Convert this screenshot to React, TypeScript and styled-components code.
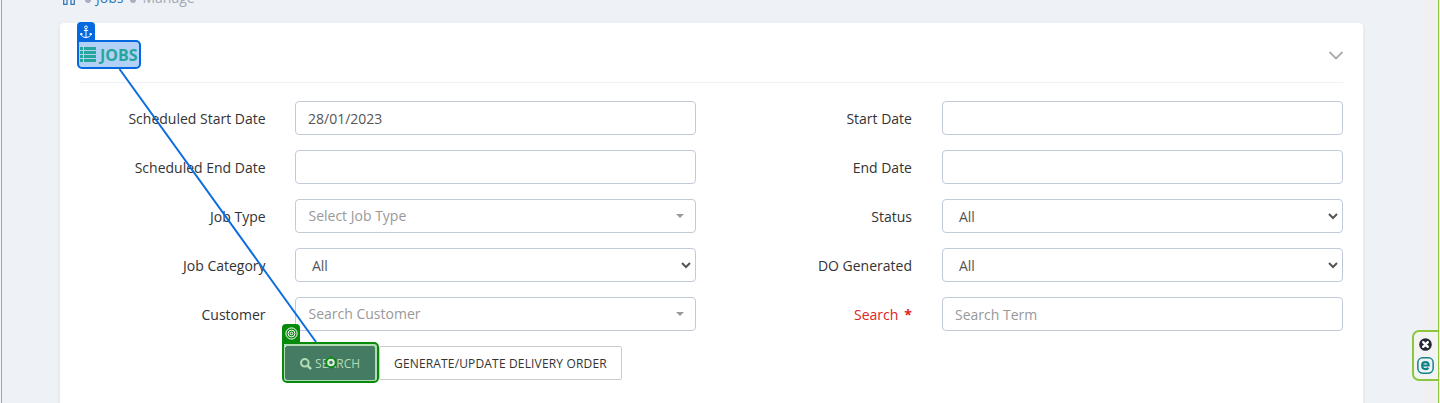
import React from "react";
import styled, { createGlobalStyle } from "styled-components";

const Global = createGlobalStyle`
  * { box-sizing: border-box; }
  body { margin: 0; overflow: hidden; background: #eef1f6; font-family: "Open Sans", sans-serif; font-size: 14px; color: #333; }
`;

const Frame = styled.div`
  position: relative;
  display: flex;
  width: 1440px;
  height: 403px;
  overflow: hidden;
  border-left: 1px solid #f7f5fa;
  border-right: 1px solid #fbf8ff;
`;

const Content = styled.div`
  display: flex;
  flex-direction: column;
  width: 1422px;
  padding-left: 58px;
  border-left: 1px solid #8cc63f;
  background: #eef1f6;
`;

const ScrollTrack = styled.div`
  width: 16px;
  background: #f0f0f0;
  border-right: 1px solid #8cc63f;
`;

const Breadcrumb = styled.nav`
  display: flex;
  flex-shrink: 0;
  align-items: flex-start;
  height: 23px;
  line-height: 20px;
`;

const Crumb = styled.span<{ $link?: boolean; $gap: number }>`
  margin: -12px 0 0 ${(p) => p.$gap}px;
  color: ${(p) => (p.$link ? "#337ab7" : "#a3a9b3")};
`;

const Dot = styled.i<{ $gap: number }>`
  width: 6px;
  height: 6px;
  margin: -3px 0 0 ${(p) => p.$gap}px;
  border-radius: 50%;
  background: #a9b1c0;
`;

const Home = styled.svg`
  margin: -8px 0 0 2px;
`;

const Card = styled.section`
  flex-shrink: 0;
  width: 1303px;
  height: 400px;
  padding: 0 20px;
  border-radius: 4px;
  background: #fff;
  box-shadow: 0 2px 3px 2px rgba(0, 0, 0, 0.03);
`;

const CardHeader = styled.header`
  display: flex;
  align-items: center;
  justify-content: space-between;
  height: 60px;
  padding-top: 6px;
  border-bottom: 1px solid #eef1f5;
`;

const Title = styled.h1`
  position: relative;
  z-index: 2;
  display: flex;
  align-items: center;
  gap: 4px;
  margin: 0 0 2px;
  font-size: 16px;
  font-weight: 700;
  line-height: 22px;
  color: #26a69a;
`;

const Form = styled.form`
  display: grid;
  grid-template-columns: 185.6px 29.4px 401px 216px 30px 401px;
  grid-auto-rows: 34px;
  row-gap: 15px;
  padding-top: 18px;
`;

const Label = styled.label<{ $required?: boolean }>`
  padding-top: 8px;
  line-height: 19px;
  text-align: right;
  white-space: nowrap;
  color: ${(p) => (p.$required ? "#e02222" : "#333")};

  &:nth-of-type(odd) { grid-column: 1; }
  &:nth-of-type(even) { grid-column: 4; }
`;

const Star = styled.b`
  margin-left: 6px;
`;

const Control = styled.div<{ $kind: Kind; $placeholder?: boolean }>`
  display: flex;
  align-items: center;
  justify-content: space-between;
  height: 34px;
  padding: ${(p) => (p.$kind === "native" ? "2px 4px 0 16px" : p.$kind === "search" ? "0 11px 0 12.5px" : "2px 12px 0")};
  border: 1px solid #c2cad8;
  border-radius: 4px;
  background: #fff;
  line-height: 20px;
  color: ${(p) => (p.$placeholder ? "#999" : "#555")};

  &:nth-of-type(odd) { grid-column: 3; }
  &:nth-of-type(even) { grid-column: 6; }
`;

const Caret = styled.i`
  border: 4px solid transparent;
  border-top-color: #999;
  border-bottom: 0;
`;

const NativeArrow = styled.svg`
  margin-top: -2px;
`;

const Actions = styled.div`
  display: flex;
  gap: 3px;
  padding: 15px 0 0 205px;
`;

const Button = styled.button<{ $primary?: boolean }>`
  display: flex;
  align-items: center;
  gap: 3px;
  width: ${(p) => (p.$primary ? 91 : 243)}px;
  height: 34px;
  padding: 2px 14px 0;
  border: 1px solid ${(p) => (p.$primary ? "#457b63" : "#ccc")};
  border-radius: 2px;
  background: ${(p) => (p.$primary ? "#457b63" : "#fff")};
  color: ${(p) => (p.$primary ? "#b1dcb3" : "#333")};
  font: 500 12px/18px "Open Sans", sans-serif;
  letter-spacing: ${(p) => (p.$primary ? 0.1 : 0.16)}px;
  white-space: nowrap;
`;

const Link = styled.svg`
  position: absolute;
  left: -1px;
  top: 0;
  pointer-events: none;
`;

const Outline = styled.div<{ $x: number; $y: number; $w: number; $h: number; $color: string; $fill: string; $ring?: string }>`
  position: absolute;
  left: ${(p) => p.$x - 1}px;
  top: ${(p) => p.$y}px;
  width: ${(p) => p.$w}px;
  height: ${(p) => p.$h}px;
  border: 2px solid ${(p) => p.$color};
  border-radius: 0 5px 5px 5px;
  background: ${(p) => p.$fill};
  box-shadow: ${(p) => (p.$ring ? `inset 0 0 0 1px ${p.$ring}, inset -1px 1px 0 1px ${p.$ring}` : "none")};
`;

const Tag = styled.span<{ $color: string }>`
  position: absolute;
  left: -2px;
  top: -20px;
  display: flex;
  align-items: center;
  justify-content: center;
  width: 18px;
  height: 19px;
  border-radius: 4px 4px 0 0;
  background: ${(p) => p.$color};
`;

const Target = styled.i`
  position: absolute;
  left: 41px;
  top: 12px;
  width: 12px;
  height: 13px;
`;

const Dock = styled.aside`
  position: absolute;
  right: 0;
  top: 330px;
  display: flex;
  flex-direction: column;
  align-items: center;
  gap: 6px;
  width: 27px;
  height: 51px;
  padding: 6px 1px 0 0;
  border: 2px solid #8cc63f;
  border-right-width: 1px;
  border-radius: 7px 0 0 7px;
  background: #f3f3f3;
`;

type Kind = "input" | "native" | "search";

interface Field {
  label: string;
  kind: Kind;
  value?: string;
  placeholder?: boolean;
  required?: boolean;
}

const fields: Field[] = [
  { label: "Scheduled Start Date", kind: "input", value: "28/01/2023" },
  { label: "Start Date", kind: "input" },
  { label: "Scheduled End Date", kind: "input" },
  { label: "End Date", kind: "input" },
  { label: "Job Type", kind: "search", value: "Select Job Type", placeholder: true },
  { label: "Status", kind: "native", value: "All" },
  { label: "Job Category", kind: "native", value: "All" },
  { label: "DO Generated", kind: "native", value: "All" },
  { label: "Customer", kind: "search", value: "Search Customer", placeholder: true },
  { label: "Search", kind: "input", value: "Search Term", placeholder: true, required: true },
];

const ListIcon = () => (
  <svg width="16" height="15" viewBox="0 0 16 15" fill="#26a69a">
    {[0, 4, 8, 12].map((y) => (
      <g key={y}>
        <rect x="0" y={y} width="3" height="3" />
        <rect x="4" y={y} width="12" height="3" />
      </g>
    ))}
  </svg>
);

const Chevron = () => (
  <NativeArrow width="10" height="7" viewBox="0 0 10 7" fill="none" stroke="#555" strokeWidth="2">
    <path d="M1 1 5 5 9 1" />
  </NativeArrow>
);

const AnchorIcon = () => (
  <svg width="12" height="14" viewBox="0 0 12 14" fill="none" stroke="#fff" strokeWidth="1">
    <circle cx="6" cy="2.3" r="1.4" />
    <path d="M6 3.7V12.5M3.8 5.5H8.2M1 8.5C1.2 11.2 3 12.3 6 12.5 9 12.3 10.8 11.2 11 8.5M.4 10 1 8.2 2.8 9.3M11.6 10 11 8.2 9.2 9.3" />
  </svg>
);

export default function App() {
  return (
    <>
      <Global />
      <Frame>
        <Content>
          <Breadcrumb>
            <Home width="14" height="13" viewBox="0 0 14 13" fill="none" stroke="#337ab7" strokeWidth="1.3">
              <path d="M1.7 4V12.3H5V6H9V12.3H12.3V4" />
            </Home>
            <Dot $gap={9} />
            <Crumb $link $gap={5}>Jobs</Crumb>
            <Dot $gap={7} />
            <Crumb $gap={6}>Manage</Crumb>
          </Breadcrumb>
          <Card>
            <CardHeader>
              <Title><ListIcon />JOBS</Title>
              <svg width="14" height="9" viewBox="0 0 14 9" fill="none" stroke="#aaa" strokeWidth="1.8">
                <path d="M.5 1 7 7.5 13.5 1" />
              </svg>
            </CardHeader>
            <Form>
              {fields.map((f) => (
                <React.Fragment key={f.label}>
                  <Label $required={f.required}>{f.label}{f.required && <Star>*</Star>}</Label>
                  <Control $kind={f.kind} $placeholder={f.placeholder}>
                    <span>{f.value}</span>
                    {f.kind === "native" && <Chevron />}
                    {f.kind === "search" && <Caret />}
                  </Control>
                </React.Fragment>
              ))}
            </Form>
            <Actions>
              <Button type="button" $primary>
                <svg width="12" height="12" viewBox="0 0 13 13" fill="none" stroke="#b1dcb3" strokeWidth="2.2">
                  <circle cx="5.2" cy="5.2" r="4.1" />
                  <path d="M8.2 8.2 12 12" strokeWidth="2.8" />
                </svg>
                SEARCH
              </Button>
              <Button type="button">GENERATE/UPDATE DELIVERY ORDER</Button>
            </Actions>
          </Card>
        </Content>
        <ScrollTrack />
        <Link width="1440" height="403" fill="none">
          <path d="M119.5 69 316 342" stroke="#0a6ce0" strokeWidth="2" />
        </Link>
        <Outline $x={77} $y={40} $w={64} $h={29} $color="#0468e0" $fill="rgba(4,104,224,.3)">
          <Tag $color="#0468e0"><AnchorIcon /></Tag>
        </Outline>
        <Outline $x={282} $y={342} $w={97} $h={41} $color="#078a0c" $fill="transparent" $ring="#b1dcb3">
          <Tag $color="#078a0c">
            <svg width="13" height="13" viewBox="0 0 13 13" fill="none" stroke="#fff">
              <circle cx="6.5" cy="6.5" r="5.6" />
              <circle cx="6.5" cy="6.5" r="3.4" />
              <circle cx="6.5" cy="6.5" r="1.3" />
            </svg>
          </Tag>
          <Target>
            <svg width="12" height="13" viewBox="0 0 12 13" style={{ display: "block" }}>
              <path d="M6 0 8.5 2 11.5 3.5V9.5L8.5 11 6 13 3.5 11 .5 9.5V3.5L3.5 2Z" fill="#078a0c" />
              <circle cx="6" cy="6.5" r="2.8" fill="#457b63" stroke="#d9eeda" strokeWidth="2" />
            </svg>
          </Target>
        </Outline>
        <Dock>
          <svg width="13" height="13" viewBox="0 0 13 13">
            <circle cx="6.5" cy="6.5" r="6.3" fill="#242936" />
            <path d="M4.2 4.2 8.8 8.8M8.8 4.2 4.2 8.8" stroke="#fff" strokeWidth="2.4" strokeLinecap="round" />
          </svg>
          <svg width="17" height="17" viewBox="0 0 16 16" fill="none" stroke="#11838b">
            <rect x=".8" y=".8" width="14.4" height="14.4" rx="4.5" strokeWidth="1.4" />
            <path d="M4.8 8H11C11 3.7 4.8 3.7 4.8 8S9 11.8 10.8 10.2" strokeWidth="2" />
          </svg>
        </Dock>
      </Frame>
    </>
  );
}
